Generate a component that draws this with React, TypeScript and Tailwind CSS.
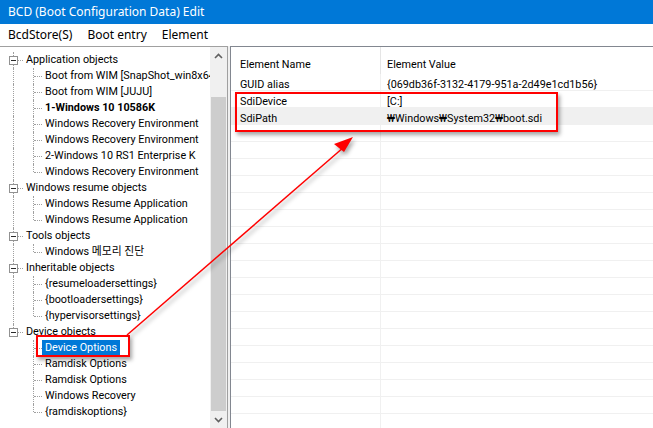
import React from "react";

type Group = { label: string; children: { label: string; bold?: boolean; selected?: boolean }[] };

const groups: Group[] = [
  {
    label: "Application objects",
    children: [
      { label: "Boot from WIM [SnapShot_win8x64]" },
      { label: "Boot from WIM [JUJU]" },
      { label: "1-Windows 10 10586K", bold: true },
      { label: "Windows Recovery Environment" },
      { label: "Windows Recovery Environment" },
      { label: "2-Windows 10 RS1 Enterprise K" },
      { label: "Windows Recovery Environment" },
    ],
  },
  {
    label: "Windows resume objects",
    children: [{ label: "Windows Resume Application" }, { label: "Windows Resume Application" }],
  },
  { label: "Tools objects", children: [{ label: "Windows 메모리 진단" }] },
  {
    label: "Inheritable objects",
    children: [
      { label: "{resumeloadersettings}" },
      { label: "{bootloadersettings}" },
      { label: "{hypervisorsettings}" },
    ],
  },
  {
    label: "Device objects",
    children: [
      { label: "Device Options", selected: true },
      { label: "Ramdisk Options" },
      { label: "Ramdisk Options" },
      { label: "Windows Recovery" },
      { label: "{ramdiskoptions}" },
    ],
  },
];

const rows = [
  { name: "GUID alias", value: "{069db36f-3132-4179-951a-2d49e1cd1b56}" },
  { name: "SdiDevice", value: "[C:]" },
  { name: "SdiPath", value: "₩Windows₩System32₩boot.sdi", active: true },
];

const dot = "border-dotted border-[#a0a0a0]";

function GroupRow({ label, last }: { label: string; last: boolean }) {
  return (
    <div className="flex h-[16px] items-center">
      <div className="relative h-full w-[23px] shrink-0">
        <span className={`absolute left-[13px] top-0 border-l ${dot} ${last ? "h-[8px]" : "h-full"}`} />
        <span className={`absolute left-[18px] top-[8px] w-[5px] border-t ${dot}`} />
        <span className="absolute left-[9px] top-[4px] flex h-[9px] w-[9px] items-center justify-center border border-[#919191] bg-white">
          <span className="h-px w-[5px] bg-[#2a2a2a]" />
        </span>
      </div>
      <span className="px-[3px] whitespace-nowrap">{label}</span>
    </div>
  );
}

function ChildRow({
  label,
  bold,
  selected,
  lastChild,
  lastGroup,
}: {
  label: string;
  bold?: boolean;
  selected?: boolean;
  lastChild: boolean;
  lastGroup: boolean;
}) {
  return (
    <div className="flex h-[16px] items-center">
      <div className="relative h-full w-[42px] shrink-0">
        {!lastGroup && <span className={`absolute left-[13px] top-0 h-full border-l ${dot}`} />}
        <span className={`absolute left-[33px] top-0 border-l ${dot} ${lastChild ? "h-[8px]" : "h-full"}`} />
        <span className={`absolute left-[34px] top-[8px] w-[8px] border-t ${dot}`} />
      </div>
      <span
        className={`flex h-[17px] items-center px-[3px] whitespace-nowrap ${bold ? "font-bold" : ""} ${
          selected ? "bg-[#0078d7] text-white" : ""
        }`}
      >
        {label}
      </span>
    </div>
  );
}

function Chevron({ up }: { up: boolean }) {
  return (
    <svg width="9" height="6" viewBox="0 0 9 6">
      <path d={up ? "M1 5 L4.5 1.5 L8 5" : "M1 1 L4.5 4.5 L8 1"} fill="none" stroke="#606060" strokeWidth="1.6" />
    </svg>
  );
}

export default function App() {
  return (
    <div className="relative h-[428px] w-[653px] overflow-hidden bg-[#f0f0f0] font-['Roboto','Noto_Sans_CJK_KR',sans-serif] text-[10.8px] text-black">
      <div className="flex h-[24px] items-center bg-[#0078d7] pl-[8px] font-['Noto_Sans',sans-serif] text-[12px] text-white">
        BCD (Boot Configuration Data) Edit
      </div>
      <div className="flex h-[22px] items-center bg-white font-['Noto_Sans',sans-serif] text-[12px]">
        <span className="pl-[8px]">BcdStore(S)</span>
        <span className="pl-[15px]">Boot entry</span>
        <span className="pl-[15px]">Element</span>
      </div>

      <div className="flex h-[382px]">
        <div className="flex w-[228px] border-t border-r border-[#a0a0a0] bg-white">
          <div className="flex-1 overflow-hidden pt-[5px]">
            {groups.map((g, gi) => {
              const lastGroup = gi === groups.length - 1;
              return (
                <div key={g.label}>
                  <GroupRow label={g.label} last={lastGroup} />
                  {g.children.map((c, ci) => (
                    <ChildRow
                      key={ci}
                      label={c.label}
                      bold={c.bold}
                      selected={c.selected}
                      lastChild={ci === g.children.length - 1}
                      lastGroup={lastGroup}
                    />
                  ))}
                </div>
              );
            })}
          </div>
          <div className="flex w-[17px] flex-col bg-[#f0f0f0]">
            <div className="flex h-[17px] items-center justify-center">
              <Chevron up />
            </div>
            <div className="h-[33px]" />
            <div className="mx-[1px] flex-1 bg-[#cdcdcd]" />
            <div className="flex h-[17px] items-center justify-center">
              <Chevron up={false} />
            </div>
          </div>
        </div>

        <div className="w-[2px]" />

        <div className="flex-1 overflow-hidden border-t border-l border-[#828790] bg-white">
          <div className="flex h-[27px]">
            <div className="h-full w-[150px] border-r border-[#e5e5e5] pt-[10px] pl-[9px]">Element Name</div>
            <div className="pt-[10px] pl-[6px]">Element Value</div>
          </div>
          {rows.map((r) => (
            <div key={r.name} className={`flex h-[17px] border-b border-[#f0f0f0] ${r.active ? "bg-[#f0f0f0]" : ""}`}>
              <div className="w-[150px] border-r border-[#f0f0f0] pt-[3px] pl-[9px]">{r.name}</div>
              <div className="whitespace-nowrap pt-[3px] pl-[6px]">{r.value}</div>
            </div>
          ))}
          {Array.from({ length: 20 }).map((_, i) => (
            <div key={i} className="flex h-[17px] border-b border-[#f0f0f0]">
              <div className="w-[150px] border-r border-[#f0f0f0]" />
            </div>
          ))}
        </div>
      </div>

      {/* annotations */}
      <div className="absolute left-[235px] top-[92px] h-[40px] w-[323px] border-2 border-[#ff0000] shadow-[2px_3px_4px_rgba(0,0,0,0.35)]" />
      <div className="absolute left-[36px] top-[335px] h-[22px] w-[94px] border-2 border-[#ff0000] shadow-[2px_3px_4px_rgba(0,0,0,0.35)]" />
      <svg
        className="pointer-events-none absolute left-0 top-0"
        width="653"
        height="428"
        style={{ filter: "drop-shadow(2px 3px 2px rgba(0,0,0,0.35))" }}
      >
        <line x1="127" y1="335" x2="344" y2="147" stroke="#ff0000" strokeWidth="1.5" />
        <polygon points="353,137 334,144 344,152" fill="#ff0000" />
      </svg>
    </div>
  );
}
